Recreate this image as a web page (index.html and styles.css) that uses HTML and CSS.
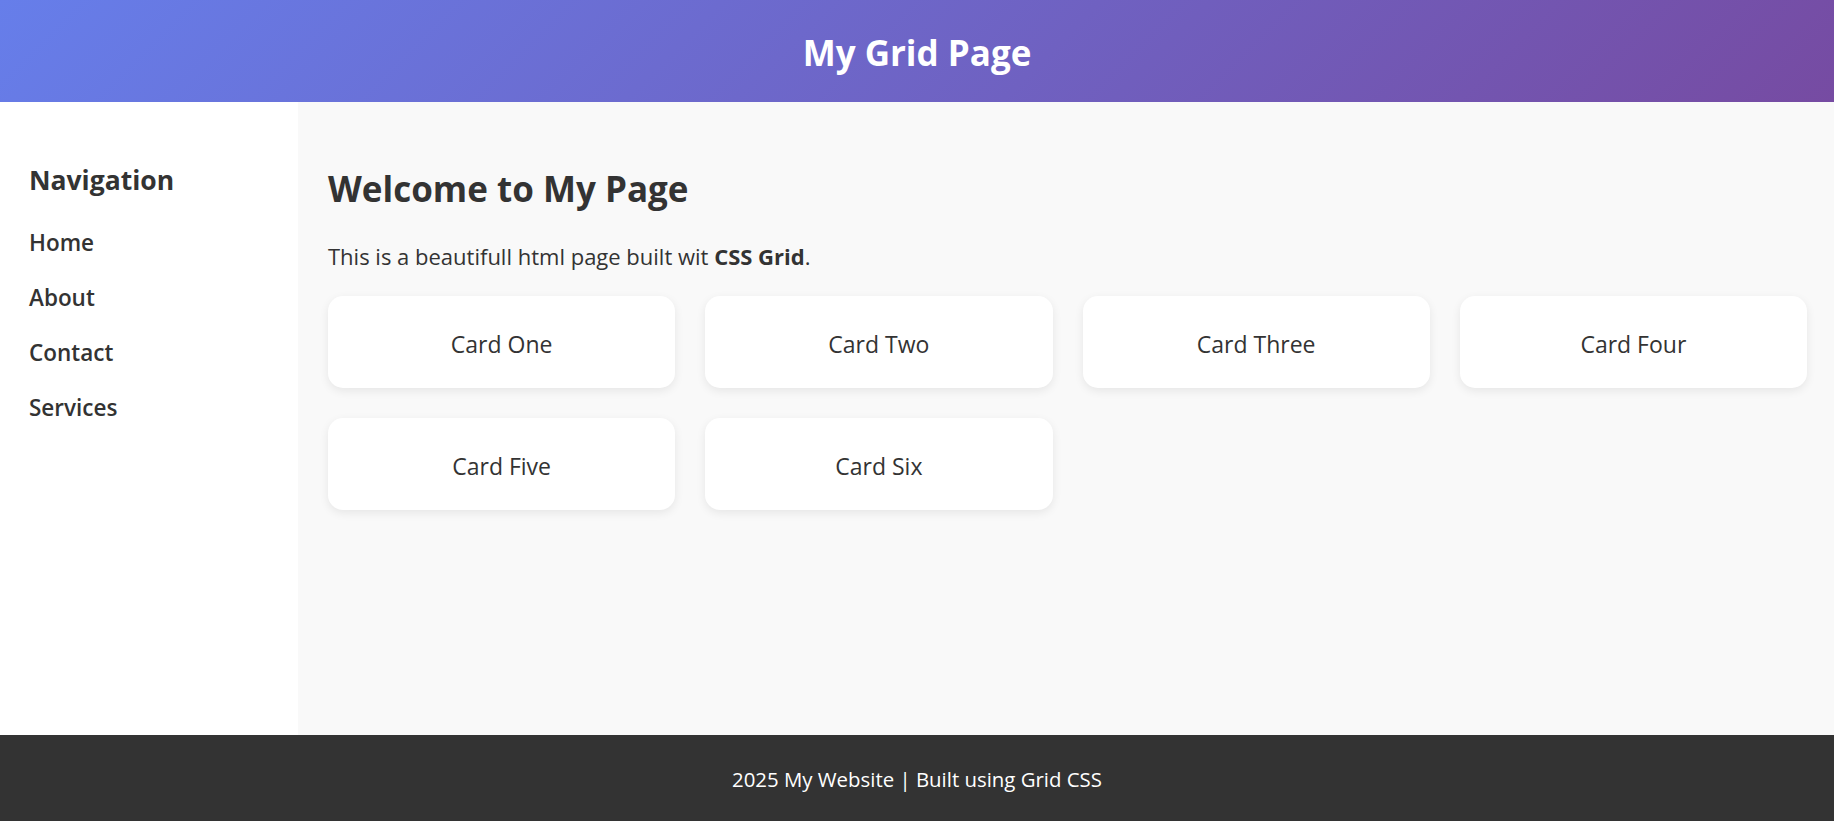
FILE: index.html
```html
<!DOCTYPE html>
<html lang="en">
<head>
<meta charset="utf-8">
<title>My Grid Page</title>
<link rel="stylesheet" href="styles.css">
</head>
<body>
<div class="page">
  <header class="header">
    <h1 class="site-title">My Grid Page</h1>
  </header>
  <aside class="sidebar">
    <h2 class="nav-title">Navigation</h2>
    <ul class="nav-list">
      <li><a href="#" class="nav-link">Home</a></li>
      <li><a href="#" class="nav-link">About</a></li>
      <li><a href="#" class="nav-link">Contact</a></li>
      <li><a href="#" class="nav-link">Services</a></li>
    </ul>
  </aside>
  <main class="main">
    <h1 class="main-title">Welcome to My Page</h1>
    <p class="intro">This is a beautifull html page built wit <strong>CSS Grid</strong>.</p>
    <div class="cards">
      <div class="card">Card One</div>
      <div class="card">Card Two</div>
      <div class="card">Card Three</div>
      <div class="card">Card Four</div>
      <div class="card">Card Five</div>
      <div class="card">Card Six</div>
    </div>
  </main>
  <footer class="footer">
    <p class="footer-text">2025 My Website | Built using Grid CSS</p>
  </footer>
</div>
</body>
</html>
```
FILE: styles.css
```css
* { box-sizing: border-box; }

html, body {
  margin: 0;
  padding: 0;
}

body {
  font-family: "Open Sans", "Noto Sans", sans-serif;
  color: #333;
  background: #f9f9f9;
}

.page {
  display: grid;
  grid-template-columns: 298px 1fr;
  grid-template-rows: 102px 1fr 86px;
  grid-template-areas:
    "header header"
    "sidebar main"
    "footer footer";
  height: 100vh;
}

.header {
  grid-area: header;
  background: linear-gradient(135deg, #667eea 0%, #764ba2 100%);
  display: flex;
  align-items: center;
  justify-content: center;
  padding-top: 4px;
}

.site-title {
  margin: 0;
  color: #fff;
  font-size: 35px;
  font-weight: 700;
  line-height: 40px;
}

.sidebar {
  grid-area: sidebar;
  background: #fff;
  padding: 61px 20px 20px 29px;
}

.nav-title {
  margin: 0 0 18px;
  font-size: 26.5px;
  font-weight: 700;
  line-height: 34px;
  color: #333;
}

.nav-list {
  list-style: none;
  margin: 0;
  padding: 0;
}

.nav-link {
  display: block;
  color: #333;
  text-decoration: none;
  font-size: 22.5px;
  font-weight: 600;
  line-height: 55px;
}

.main {
  grid-area: main;
  background: #f9f9f9;
  padding: 66px 27px 30px 30px;
}

.main-title {
  margin: 0 0 31px;
  font-size: 35px;
  font-weight: 700;
  line-height: 42px;
}

.intro {
  margin: 0 0 25px;
  font-size: 22px;
  line-height: 30px;
}

.intro strong {
  font-weight: 700;
}

.cards {
  display: grid;
  grid-template-columns: repeat(4, 1fr);
  gap: 30px;
}

.card {
  height: 92px;
  padding-top: 3px;
  background: #fff;
  border-radius: 15px;
  box-shadow: 0 3px 10px rgba(0, 0, 0, 0.08);
  display: flex;
  align-items: center;
  justify-content: center;
  font-size: 23px;
  color: #333;
}

.footer {
  grid-area: footer;
  background: #333;
  display: flex;
  align-items: center;
  justify-content: center;
  padding-top: 2px;
}

.footer-text {
  margin: 0;
  color: #fff;
  font-size: 20.4px;
  line-height: 26px;
}
```
